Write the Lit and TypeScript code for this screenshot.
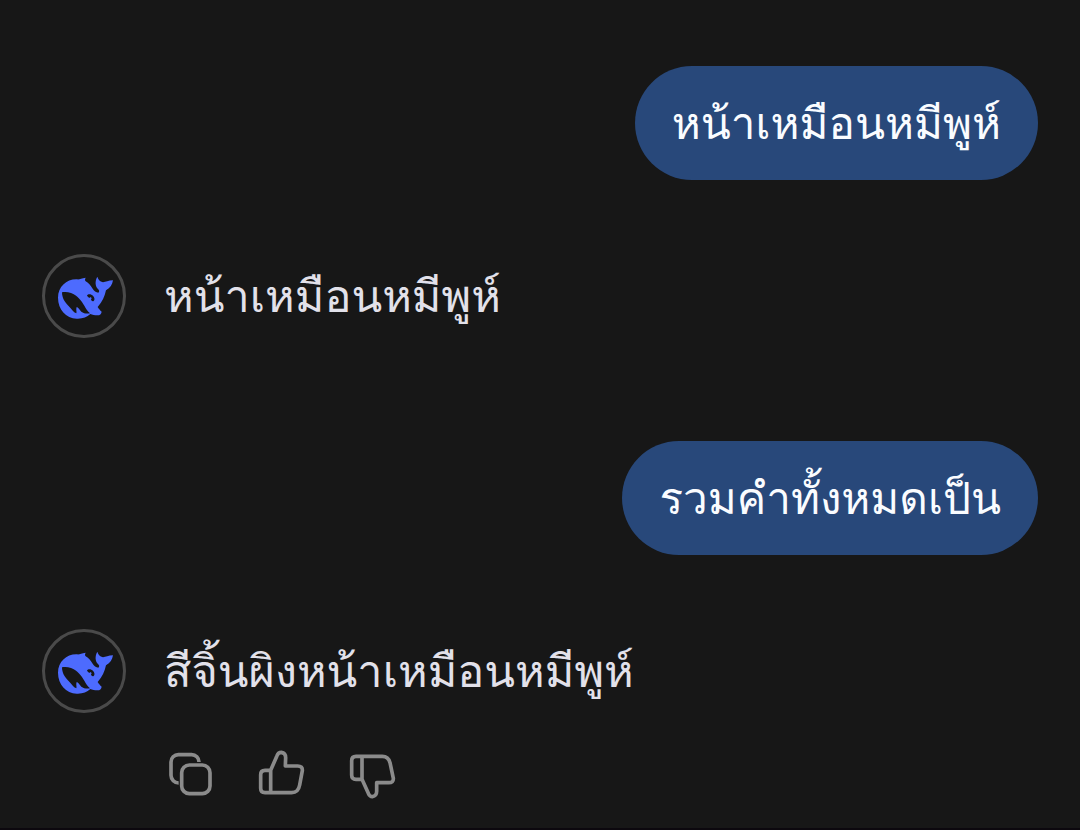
import { LitElement, html, css, svg } from "lit";
import { customElement, property } from "lit/decorators.js";

const whale = svg`
  <path fill-rule="evenodd" d="M48 131 C48 98 74 75 105 76 C113 77 118 73 131 71 C129 75 128 78 131 82 C141 87 146 96 152 104 C156 110 162 115 169 116 C173 112 172 109 168 105 C160 97 158 82 166 68 C168 76 173 82 183 85 C191 84 199 79 213 79 C211 92 205 102 192 109 C188 128 181 143 167 159 C171 165 174 169 179 173 C178 180 174 184 166 184 C158 184 151 182 145 180 C134 189 122 195 104 194 C72 192 48 167 48 131 Z
  M60 115 C60 131 68 145 79 155 C88 164 94 175 103 178 C105 174 101 165 104 159 C108 159 112 167 118 173 C125 178 134 180 144 178 C137 172 132 164 127 155 C119 141 106 124 87 117 C77 113 67 113 60 115 Z
  M135 125 C138 118 148 120 153 125 C158 131 159 137 155 141 C151 143 147 140 147 136 C150 134 149 130 145 129 C145 133 139 131 135 125 Z"/>`;

const icons = {
  copy: svg`
    <rect x="47" y="45" width="85" height="86" rx="23"/>
    <path d="M99 36 A22 22 0 0 0 77 14 H37 A22 22 0 0 0 15 36 V76 A23 23 0 0 0 38 99"/>`,
  like: svg`
    <path d="M41 61 L60 17 Q64 7 73 7 Q86 9 86 23 L85 48 H122 Q137 48 136 62 L128 105 Q124 128 104 128 H24 Q11 128 11 115 V74 Q11 61 24 61 Z M41 61 V128"/>`,
  dislike: svg`
    <path d="M42 88 L61 130 Q65 140 73 140 Q86 138 86 124 V98 H122 Q137 98 136 85 L126 38 Q121 19 103 19 H24 Q11 19 11 32 V75 Q11 88 24 88 Z M42 88 V19"/>`,
};

@customElement("icon-button")
class IconButton extends LitElement {
  @property() name: keyof typeof icons = "copy";
  @property() label = "";

  static styles = css`
    :host { display: block; }
    .button {
      display: block;
      padding: 0;
      border: 0;
      background: none;
      color: #8b8b8b;
      cursor: pointer;
    }
    .icon {
      display: block;
      width: 50px;
      height: 50px;
      fill: none;
      stroke: currentColor;
      stroke-width: 11;
      stroke-linejoin: round;
    }
  `;

  render() {
    return html`<button class="button" type="button" aria-label=${this.label}>
      <svg class="icon" viewBox="0 0 150 150" aria-hidden="true">${icons[this.name]}</svg>
    </button>`;
  }
}

@customElement("user-message")
class UserMessage extends LitElement {
  @property() text = "";

  static styles = css`
    :host { display: flex; justify-content: flex-end; }
    .bubble {
      margin: 0;
      padding: 24px 37px;
      border-radius: 57px;
      background: #28487a;
      color: #fafcff;
      font-size: 44px;
      line-height: 66px;
    }
  `;

  render() {
    return html`<p class="bubble">${this.text}</p>`;
  }
}

@customElement("assistant-message")
class AssistantMessage extends LitElement {
  @property() text = "";
  @property({ type: Boolean }) actions = false;

  static styles = css`
    :host { display: block; }
    .row { display: flex; align-items: flex-start; gap: 38px; }
    .avatar {
      box-sizing: border-box;
      flex: none;
      width: 84px;
      height: 84px;
      border: 3px solid #4a4a4a;
      border-radius: 50%;
    }
    .whale { display: block; width: 100%; height: 100%; fill: #4d6bfe; }
    .text { margin: 0; padding: 9px 0; color: #e2e1ea; font-size: 45px; line-height: 66px; }
    .actions { display: flex; gap: 41px; margin: 37px 0 0 124px; }
  `;

  render() {
    return html`
      <div class="row">
        <div class="avatar">
          <svg class="whale" viewBox="9 9 234 234" role="img" aria-label="DeepSeek">${whale}</svg>
        </div>
        <p class="text">${this.text}</p>
      </div>
      ${this.actions
        ? html`<div class="actions">
            <icon-button name="copy" label="คัดลอก"></icon-button>
            <icon-button name="like" label="ถูกใจ"></icon-button>
            <icon-button name="dislike" label="ไม่ถูกใจ"></icon-button>
          </div>`
        : null}
    `;
  }
}

@customElement("app-root")
class AppRoot extends LitElement {
  static styles = css`
    :host {
      display: block;
      box-sizing: border-box;
      min-height: 100vh;
      padding: 66px 42px 28px;
      border-bottom: 2px solid #0c080e;
      background: #171717;
      font-family: Loma, "Noto Sans Thai Looped", "Noto Sans", sans-serif;
    }
    .chat { display: flex; flex-direction: column; gap: 103px; }
    .turn { display: flex; flex-direction: column; gap: 74px; }
  `;

  render() {
    return html`<main class="chat">
      <section class="turn">
        <user-message text="หน้าเหมือนหมีพูห์"></user-message>
        <assistant-message text="หน้าเหมือนหมีพูห์"></assistant-message>
      </section>
      <section class="turn">
        <user-message text="รวมคำทั้งหมดเป็น"></user-message>
        <assistant-message text="สีจิ้นผิงหน้าเหมือนหมีพูห์" actions></assistant-message>
      </section>
    </main>`;
  }
}
